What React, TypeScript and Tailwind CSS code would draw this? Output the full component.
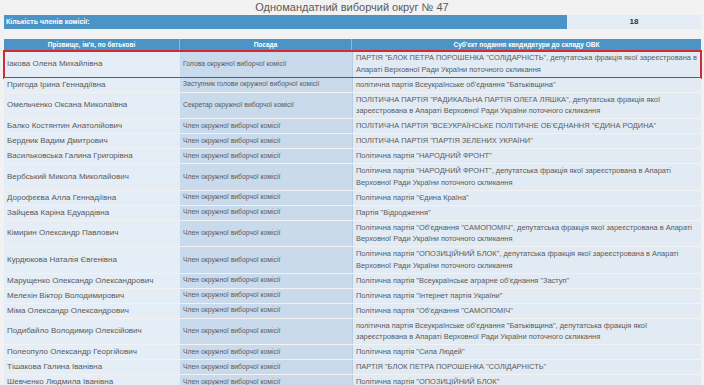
import React from "react";

type Row = { name: string; post: string; party: string[] };

const rows: Row[] = [
  {
    name: "Іакова Олена Михайлівна",
    post: "Голова окружної виборчої комісії",
    party: [
      "ПАРТІЯ \"БЛОК ПЕТРА ПОРОШЕНКА \"СОЛІДАРНІСТЬ\", депутатська фракція якої зареєстрована в",
      "Апараті Верховної Ради України поточного скликання",
    ],
  },
  {
    name: "Пригода Ірина Геннадіївна",
    post: "Заступник голови окружної виборчої комісії",
    party: ["політична партія Всеукраїнське об'єднання \"Батьківщина\""],
  },
  {
    name: "Омельченко Оксана Миколаївна",
    post: "Секретар окружної виборчої комісії",
    party: [
      "ПОЛІТИЧНА ПАРТІЯ \"РАДИКАЛЬНА ПАРТІЯ ОЛЕГА ЛЯШКА\", депутатська фракція якої",
      "зареєстрована в Апараті Верховної Ради України поточного скликання",
    ],
  },
  {
    name: "Балко Костянтин Анатолійович",
    post: "Член окружної виборчої комісії",
    party: ["ПОЛІТИЧНА ПАРТІЯ \"ВСЕУКРАЇНСЬКЕ ПОЛІТИЧНЕ ОБ'ЄДНАННЯ \"ЄДИНА РОДИНА\""],
  },
  {
    name: "Бердник Вадим Дмитрович",
    post: "Член окружної виборчої комісії",
    party: ["ПОЛІТИЧНА ПАРТІЯ \"ПАРТІЯ ЗЕЛЕНИХ УКРАЇНИ\""],
  },
  {
    name: "Васильковська Галина Григорівна",
    post: "Член окружної виборчої комісії",
    party: ["Політична партія \"НАРОДНИЙ ФРОНТ\""],
  },
  {
    name: "Вербський Микола Миколайович",
    post: "Член окружної виборчої комісії",
    party: [
      "Політична партія \"НАРОДНИЙ ФРОНТ\", депутатська фракція якої зареєстрована в Апараті",
      "Верховної Ради України поточного скликання",
    ],
  },
  {
    name: "Дорофєєва Алла Геннадіївна",
    post: "Член окружної виборчої комісії",
    party: ["Політична партія \"Єдина Країна\""],
  },
  {
    name: "Зайцева Каріна Едуардівна",
    post: "Член окружної виборчої комісії",
    party: ["Партія \"Відродження\""],
  },
  {
    name: "Кімирин Олександр Павлович",
    post: "Член окружної виборчої комісії",
    party: [
      "Політична партія \"Об'єднання \"САМОПОМІЧ\", депутатська фракція якої зареєстрована в Апараті",
      "Верховної Ради України поточного скликання",
    ],
  },
  {
    name: "Курдюкова Наталія Євгенівна",
    post: "Член окружної виборчої комісії",
    party: [
      "Політична партія \"ОПОЗИЦІЙНИЙ БЛОК\", депутатська фракція якої зареєстрована в Апараті",
      "Верховної Ради України поточного скликання",
    ],
  },
  {
    name: "Марущенко Олександр Олександрович",
    post: "Член окружної виборчої комісії",
    party: ["Політична партія \"Всеукраїнське аграрне об'єднання \"Заступ\""],
  },
  {
    name: "Мелехін Віктор Володимирович",
    post: "Член окружної виборчої комісії",
    party: ["Політична партія \"Інтернет партія України\""],
  },
  {
    name: "Міма Олександр Олександрович",
    post: "Член окружної виборчої комісії",
    party: ["Політична партія \"Об'єднання \"САМОПОМІЧ\""],
  },
  {
    name: "Подибайло Володимир Олексійович",
    post: "Член окружної виборчої комісії",
    party: [
      "політична партія Всеукраїнське об'єднання \"Батьківщина\", депутатська фракція якої",
      "зареєстрована в Апараті Верховної Ради України поточного скликання",
    ],
  },
  {
    name: "Полеопуло Олександр Георгійович",
    post: "Член окружної виборчої комісії",
    party: ["Політична партія \"Сила Людей\""],
  },
  {
    name: "Тішакова Галина Іванівна",
    post: "Член окружної виборчої комісії",
    party: ["ПАРТІЯ \"БЛОК ПЕТРА ПОРОШЕНКА \"СОЛІДАРНІСТЬ\""],
  },
  {
    name: "Шевченко Людмила Іванівна",
    post: "Член окружної виборчої комісії",
    party: ["Політична партія \"ОПОЗИЦІЙНИЙ БЛОК\""],
  },
];

export default function App() {
  return (
    <div
      className="w-[704px] h-[385px] overflow-hidden bg-[#f2f2f2] text-[#5a5a5a]"
      style={{ fontFamily: "Tahoma, 'Liberation Sans', sans-serif" }}
    >
      <div className="h-[15px] flex items-center justify-center text-[11px] leading-none text-[#5a5a5a]">
        Одномандатний виборчий округ № 47
      </div>

      <div className="ml-[4px] mr-[3px] flex h-[14px]">
        <div className="w-[563px] shrink-0 bg-[#4b94c5] flex items-center pl-[2px] text-[7px] font-bold text-white">
          Кількість членів комісії:
        </div>
        <div className="flex-1 bg-[#e4ecf5] flex items-center justify-center text-[8px] font-bold text-[#333]">
          18
        </div>
      </div>

      <div className="ml-[4px] mr-[3px] mt-[10px] flex flex-col gap-px">
        <div className="flex h-[11px] bg-[#4b94c5] text-[6.5px] font-bold text-white">
          <div className="w-[175px] shrink-0 flex items-center justify-center">Прізвище, ім'я, по батькові</div>
          <div className="w-px shrink-0 bg-[#8fbadb]" />
          <div className="w-[171px] shrink-0 flex items-center justify-center">Посада</div>
          <div className="w-px shrink-0 bg-[#8fbadb]" />
          <div className="flex-1 min-w-0 flex items-center justify-center">Суб'єкт подання кандидатури до складу ОВК</div>
        </div>

        {rows.map((r, i) => (
          <div key={i} className="relative flex">
            <div className="w-[176px] shrink-0 bg-[#e5edf6] flex items-center pl-[3px] text-[8px] whitespace-nowrap">
              {r.name}
            </div>
            <div className="w-[172px] shrink-0 bg-[#c8daec] flex items-center pl-[3px] text-[6.8px] whitespace-nowrap">
              {r.post}
            </div>
            <div className="flex-1 min-w-0 bg-[#e2ebf4] border-l border-[#b5cde4] pl-[3px] py-[1.25px] text-[7.45px] leading-[11.5px] whitespace-nowrap">
              {r.party.map((l, j) => (
                <div key={j}>{l}</div>
              ))}
            </div>
            {i === 0 && (
              <div className="absolute -inset-x-px -top-px -bottom-[2px] border-2 border-[#d42a33] pointer-events-none" />
            )}
          </div>
        ))}
      </div>
    </div>
  );
}
